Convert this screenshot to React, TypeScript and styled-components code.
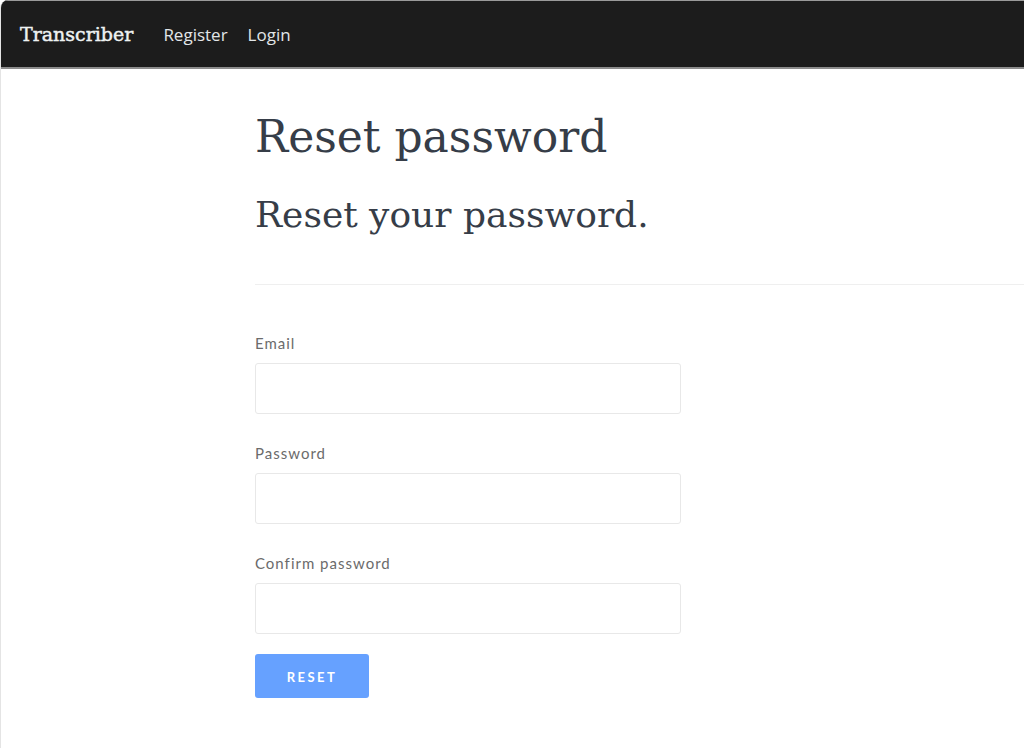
import React from "react";
import styled, { createGlobalStyle } from "styled-components";

const Global = createGlobalStyle`
  html, body { margin: 0; padding: 0; background: #fff; }
  body { font-family: "Lato", "Open Sans", sans-serif; }
  * { box-sizing: border-box; }
`;

const Frame = styled.div`
  min-height: 748px;
  border-left: 1px solid #e4e4e4;
  border-top-left-radius: 8px;
  overflow: hidden;
  background: #fff;
`;

const NavBar = styled.nav`
  height: 69px;
  background: #1c1c1c;
  border-top: 1px solid #9a9a9a;
  border-bottom: 2px solid #8c8c8c;
  display: flex;
  align-items: center;
  padding: 0 19px;
  gap: 20px;
`;

const Brand = styled.a`
  font-family: "DejaVu Serif", serif;
  font-weight: 400;
  font-size: 19px;
  -webkit-text-stroke: 0.45px #eef2f2;
  color: #eef2f2;
  margin-right: 10px;
  text-decoration: none;
`;

const NavLink = styled.a`
  font-family: "Open Sans", "Noto Sans", sans-serif;
  font-size: 17px;
  color: #e2e6e8;
  text-decoration: none;
`;

const Main = styled.main`
  padding: 38px 0 0 254px;
`;

const Title = styled.h1`
  font-family: "DejaVu Serif", serif;
  font-weight: 400;
  font-size: 44px;
  line-height: 60px;
  color: #363d48;
  margin: 0;
`;

const Subtitle = styled.h2`
  font-family: "DejaVu Serif", serif;
  font-weight: 400;
  font-size: 36px;
  line-height: 48px;
  color: #363d48;
  margin: 24px 0 0;
`;

const Divider = styled.hr`
  border: 0;
  border-top: 1px solid #efefef;
  margin: 45px 0 0;
`;

const Form = styled.form`
  display: flex;
  flex-direction: column;
  gap: 30px;
  padding-top: 49px;
  width: 426px;
`;

const Field = styled.div`
  display: flex;
  flex-direction: column;
`;

const Label = styled.label`
  font-family: "Lato", sans-serif;
  font-size: 15px;
  letter-spacing: 1px;
  color: #6b6b6b;
  line-height: 18px;
  margin-bottom: 11px;
`;

const Input = styled.input`
  height: 51px;
  border: 1px solid #e8e8e8;
  border-radius: 3px;
  background: #fff;
  padding: 0 12px;
  font-size: 15px;
  outline: none;
`;

const Actions = styled.div`
  margin-top: -10px;
`;

const Button = styled.button`
  width: 114px;
  height: 44px;
  border: 0;
  border-radius: 3px;
  background: #66a1ff;
  color: #fff;
  font-family: "Lato", sans-serif;
  font-weight: 700;
  font-size: 13px;
  letter-spacing: 2.5px;
  text-transform: uppercase;
  padding-top: 2px;
  cursor: pointer;
`;

export default function App() {
  return (
    <>
      <Global />
      <Frame>
        <NavBar>
          <Brand href="#">Transcriber</Brand>
          <NavLink href="#">Register</NavLink>
          <NavLink href="#">Login</NavLink>
        </NavBar>
        <Main>
          <Title>Reset password</Title>
          <Subtitle>Reset your password.</Subtitle>
          <Divider />
          <Form onSubmit={(e) => e.preventDefault()}>
            <Field>
              <Label>Email</Label>
              <Input type="email" />
            </Field>
            <Field>
              <Label>Password</Label>
              <Input type="password" />
            </Field>
            <Field>
              <Label>Confirm password</Label>
              <Input type="password" />
            </Field>
            <Actions>
              <Button type="submit">Reset</Button>
            </Actions>
          </Form>
        </Main>
      </Frame>
    </>
  );
}
